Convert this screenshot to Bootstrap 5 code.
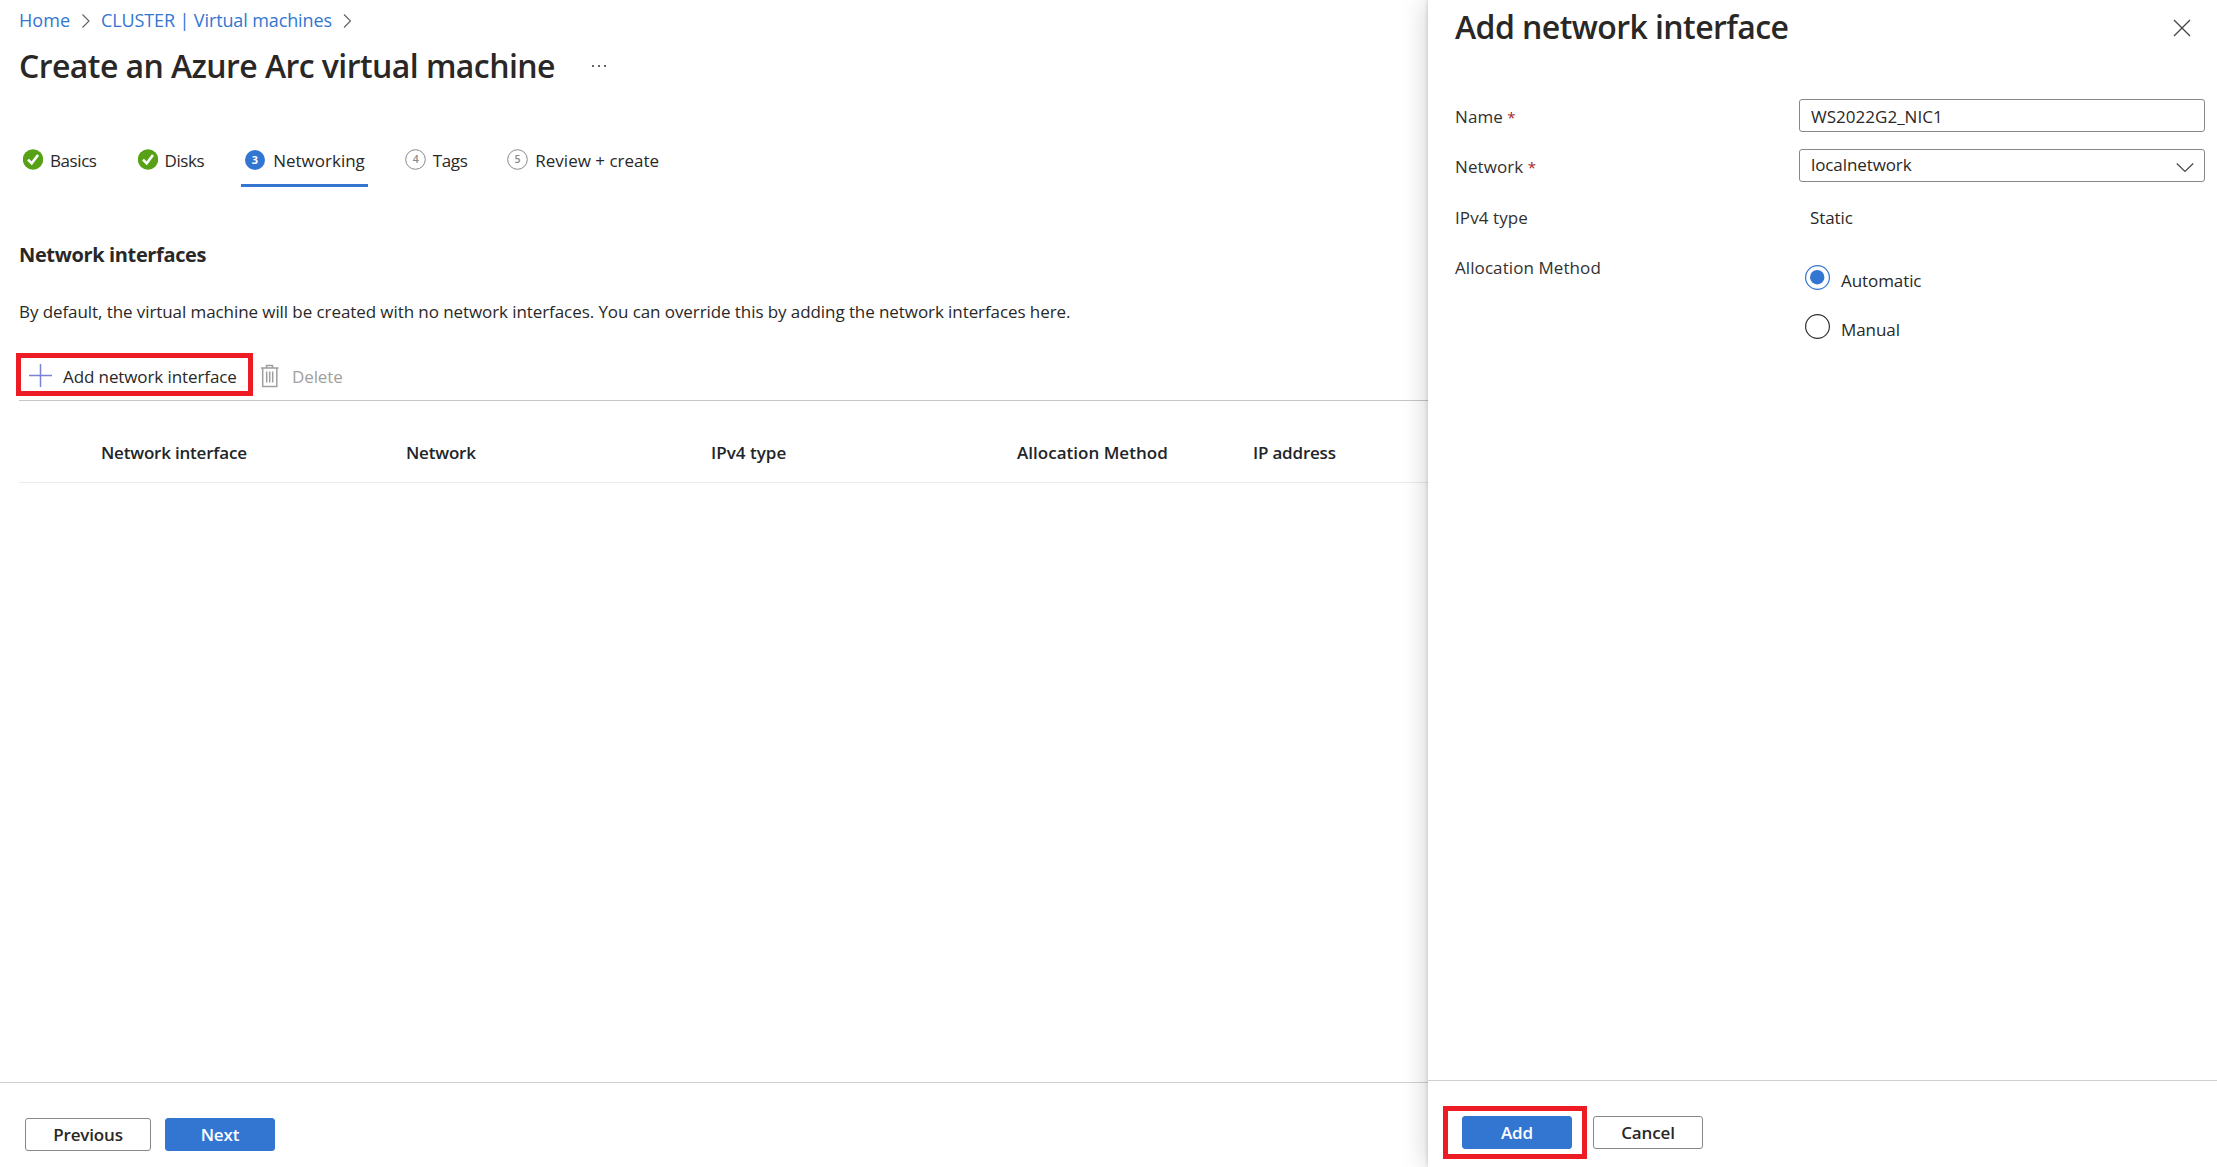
<!DOCTYPE html>
<html lang="en">
<head>
<meta charset="utf-8">
<meta name="viewport" content="width=device-width, initial-scale=1">
<title>Create an Azure Arc virtual machine</title>
<link href="https://cdn.jsdelivr.net/npm/bootstrap@5.3.0/dist/css/bootstrap.min.css" rel="stylesheet">
<style>
  :root { --ink: #292827; --azure: #3276d1; --callout: #ed1c24; --rule: #c8c6c4; }
  body { font-family: "Open Sans", "Noto Sans", sans-serif; font-size: 17px; line-height: 24px; letter-spacing: -.08px; color: var(--ink); background: #fff; }
  svg { display: block; flex: none; }
  .blade-main { padding-top: 8px; }
  .blade-side { width: 789px; box-shadow: 0 0 4px rgba(0,0,0,.18), 0 0 26px rgba(0,0,0,.2); z-index: 2; }
  .crumbs { font-size: 18px; letter-spacing: -.12px; padding-left: 19px; }
  .crumbs a { color: var(--azure); text-decoration: none; }
  .crumbs .crumb-home { letter-spacing: .05px; }
  .crumb-gap { margin: 0 7px 0 8px; }
  .blade-title { font-size: 32px; line-height: 40px; font-weight: 600; letter-spacing: -.57px; margin: 0; }
  .title-row { padding: 14px 0 0 19px; gap: 35px; }
  .steps { padding: 62px 0 0 23px; height: 101px; }
  .steps .nav-link { padding: 0; color: var(--ink); gap: 7px; height: 39px; letter-spacing: -.42px; }
  .steps .nav-link svg { margin-top: 1px; }
  .steps .nav-link + .nav-link { margin-left: 41px; }
  .steps .nav-link span { padding-top: 1px; }
  .steps .nav-link.step-on { padding: 1px 3px 0 4px; margin: 0 -4px 0 37px; gap: 8px; letter-spacing: 0; border-bottom: 3px solid var(--azure); }
  .steps .step-on span { padding-top: 0; }
  .steps .nav-link.step-last { letter-spacing: 0; margin-left: 40px; }
  .section-head { font-size: 20px; line-height: 28px; font-weight: 700; letter-spacing: -.36px; margin: 54px 0 31px; }
  .content-pad { padding-left: 19px; }
  .toolbar { border-bottom: 1px solid var(--rule); margin-top: 29px; height: 48px; }
  .cmd { height: 43px; border: 5px solid transparent; border-radius: 0; padding: 0; font-size: 17px; line-height: 24px; letter-spacing: -.1px; color: inherit; }
  .cmd svg { margin-top: 2px; }
  .cmd-add { border-color: var(--callout); width: 237px; margin-left: -3px; padding-left: 8px; gap: 11px; }
  .cmd-del, .cmd-del:disabled { color: #a19f9d; opacity: 1; gap: 12px; margin-left: 2px; border-color: transparent; }
  .cmd span { padding-top: 4px; }
  .grid-table { width: 1409px; table-layout: fixed; letter-spacing: -.2px; margin: 0; }
  .grid-table th { font-weight: 600; padding: 40px 0 17px; border-bottom: 1px solid #edebe9; line-height: 24px; }
  .grid-table .wide-name { letter-spacing: .02px; }
  .foot-main { border-top: 1px solid #d2d0ce; height: 85px; padding: 35px 0 0 25px; gap: 14px; }
  .foot-side { border-top: 1px solid #d2d0ce; height: 87px; padding: 25px 0 0 15px; gap: 6px; }
  .act { --bs-btn-font-size: 17px; --bs-btn-font-weight: 600; --bs-btn-line-height: 24px; --bs-btn-border-radius: 3px; --bs-btn-padding-x: 0; --bs-btn-padding-y: 0; height: 33px; width: 110px; letter-spacing: -.15px; padding-top: 1px; }
  .act-main { --bs-btn-bg: var(--azure); --bs-btn-border-color: var(--azure); --bs-btn-color: #fff; }
  .act-plain { --bs-btn-bg: #fff; --bs-btn-border-color: #8a8886; --bs-btn-color: var(--ink); }
  .act-prev { width: 126px; }
  .act-cancel { margin-top: 10px; }
  .callout-frame { border: 5px solid var(--callout); height: 53px; width: 144px; padding: 5px 0 0 14px; }
  .side-head { padding: 7px 26px 0 27px; height: 99px; }
  .side-head svg { margin-top: 12px; }
  .side-form { padding: 0 12px 0 27px; }
  .field-label { width: 344px; flex: none; color: #323130; letter-spacing: .08px; }
  .req { color: #a4262c; font-size: 15px; }
  .field-row { height: 50px; }
  .field-row .field-label { padding-top: 6px; }
  .field-row.plain-row .field-label, .plain-value { padding-top: 7px; }
  .plain-value { padding-left: 11px; }
  .text-box { height: 33px; border: 1px solid #8a8886; border-radius: 3px; padding: 1px 11px 0; font-size: 17px; line-height: 24px; color: var(--ink); letter-spacing: .02px; }
  .select-box { padding: 3px 10px 0 11px; letter-spacing: -.1px; }
  .radio-set { padding: 16px 0 0 6px; gap: 24px; }
  .radio-set label { gap: 11px; height: 25px; }
  .radio-set span { padding-top: 4px; }
</style>
<script src="https://cdn.jsdelivr.net/npm/bootstrap@5.3.0/dist/js/bootstrap.bundle.min.js"></script>
</head>
<body class="d-flex vh-100 overflow-hidden">

<main class="blade-main d-flex flex-column flex-grow-1 overflow-hidden">
  <nav class="crumbs d-flex" aria-label="Breadcrumb">
    <a class="crumb-home" href="#">Home</a>
    <svg class="crumb-gap" width="16" height="24" viewBox="0 0 16 24" fill="none" stroke="#605e5c" stroke-width="1.1"><path d="M4.500 6.500 11 13 4.500 19.500"/></svg>
    <a href="#">CLUSTER | Virtual machines</a>
    <svg class="crumb-gap" width="16" height="24" viewBox="0 0 16 24" fill="none" stroke="#605e5c" stroke-width="1.1"><path d="M4 6.500 10.500 13 4 19.500"/></svg>
  </nav>
  <div class="title-row d-flex">
    <h1 class="blade-title">Create an Azure Arc virtual machine</h1>
    <svg width="20" height="40" viewBox="0 0 20 40" fill="#323130"><circle cx="3" cy="20" r="1"/><circle cx="9" cy="20" r="1"/><circle cx="15" cy="20" r="1"/></svg>
  </div>

  <nav class="steps nav flex-nowrap">
    <a class="nav-link d-flex" href="#">
      <svg width="20" height="21" viewBox="0 0 20 21"><circle cx="10" cy="10.500" r="10.200" fill="#57a116"/><path d="M5 10.600 8.700 14.300 15 6" fill="none" stroke="#fff" stroke-width="2.600"/></svg>
      <span>Basics</span></a>
    <a class="nav-link d-flex" href="#">
      <svg width="20" height="21" viewBox="0 0 20 21"><circle cx="10" cy="10.500" r="10.200" fill="#57a116"/><path d="M5 10.600 8.700 14.300 15 6" fill="none" stroke="#fff" stroke-width="2.600"/></svg>
      <span>Disks</span></a>
    <a class="nav-link step-on d-flex" href="#">
      <svg width="20" height="21" viewBox="0 0 20 21"><circle cx="10" cy="10" r="10" fill="#3276d1"/><text x="10" y="14" text-anchor="middle" font-size="11" font-weight="700" fill="#fff">3</text></svg>
      <span>Networking</span></a>
    <a class="nav-link d-flex" href="#">
      <svg width="21" height="21" viewBox="0 0 21 21"><circle cx="10.500" cy="10.500" r="9.800" fill="#fff" stroke="#8a8886"/><text x="10.500" y="14.200" text-anchor="middle" font-size="10.500" font-weight="600" fill="#8a8886">4</text></svg>
      <span>Tags</span></a>
    <a class="nav-link step-last d-flex" href="#">
      <svg width="21" height="21" viewBox="0 0 21 21"><circle cx="10.500" cy="10.500" r="9.800" fill="#fff" stroke="#8a8886"/><text x="10.500" y="14.200" text-anchor="middle" font-size="10.500" font-weight="600" fill="#8a8886">5</text></svg>
      <span>Review + create</span></a>
  </nav>

  <section class="content-pad flex-grow-1">
    <h2 class="section-head">Network interfaces</h2>
    <p class="m-0">By default, the virtual machine will be created with no network interfaces. You can override this by adding the network interfaces here.</p>
    <div class="toolbar d-flex">
      <button class="btn cmd cmd-add d-flex align-items-center" type="button">
        <svg width="23" height="23" viewBox="0 0 23 23" fill="none" stroke="#7a82d8" stroke-width="1.500"><path d="M0 11.500H23M11.500 0V23"/></svg>
        <span>Add network interface</span></button>
      <button class="btn cmd cmd-del d-flex align-items-center" type="button" disabled>
        <svg width="20" height="24" viewBox="0 0 20 24" fill="none" stroke="#a19f9d" stroke-width="1.500"><path d="M1 4H18.500M6.500 4V1.500H12.500V4M2.700 4V22.500H16.800V4M6.700 7.500V18.500M9.700 7.500V18.500M12.700 7.500V18.500"/></svg>
        <span>Delete</span></button>
    </div>
    <table class="table table-borderless grid-table">
      <colgroup><col style="width:82px"><col style="width:305px"><col style="width:305px"><col style="width:306px"><col style="width:236px"><col></colgroup>
      <thead><tr><th></th><th>Network interface</th><th>Network</th><th class="wide-name">IPv4 type</th><th class="wide-name">Allocation Method</th><th>IP address</th></tr></thead>
    </table>
  </section>

  <footer class="foot-main d-flex">
    <button class="btn act act-plain act-prev" type="button">Previous</button>
    <button class="btn act act-main" type="button">Next</button>
  </footer>
</main>

<aside class="blade-side d-flex flex-column flex-shrink-0 bg-white">
  <header class="side-head d-flex justify-content-between">
    <h2 class="blade-title">Add network interface</h2>
    <svg width="18" height="18" viewBox="0 0 18 18" fill="none" stroke="#484644" stroke-width="1.300"><path d="M1 1 17 17M17 1 1 17"/></svg>
  </header>
  <form class="side-form flex-grow-1">
    <div class="field-row d-flex">
      <label class="field-label" for="nic">Name <span class="req">*</span></label>
      <input id="nic" class="text-box flex-grow-1" type="text" value="WS2022G2_NIC1">
    </div>
    <div class="field-row d-flex">
      <label class="field-label">Network <span class="req">*</span></label>
      <div class="text-box select-box d-flex justify-content-between flex-grow-1">
        <span>localnetwork</span>
        <svg width="18" height="24" viewBox="0 0 18 24" fill="none" stroke="#484644" stroke-width="1.200"><path d="M.8 10.500 9 18.500 17.200 10.500"/></svg>
      </div>
    </div>
    <div class="field-row plain-row d-flex">
      <div class="field-label">IPv4 type</div>
      <div class="plain-value">Static</div>
    </div>
    <div class="field-row plain-row d-flex">
      <div class="field-label">Allocation Method</div>
      <div class="radio-set d-flex flex-column">
        <label class="d-flex">
          <svg width="25" height="25" viewBox="0 0 25 25"><circle cx="12.500" cy="12.500" r="11.900" fill="#fff" stroke="#3276d1" stroke-width="1.200"/><circle cx="12.200" cy="12.200" r="7.200" fill="#3276d1"/></svg>
          <span>Automatic</span></label>
        <label class="d-flex">
          <svg width="25" height="25" viewBox="0 0 25 25"><circle cx="12.500" cy="12.500" r="11.900" fill="#fff" stroke="#323130" stroke-width="1.200"/></svg>
          <span>Manual</span></label>
      </div>
    </div>
  </form>
  <footer class="foot-side d-flex">
    <div class="callout-frame"><button class="btn act act-main" type="button">Add</button></div>
    <button class="btn act act-plain act-cancel" type="button">Cancel</button>
  </footer>
</aside>
</body>
</html>
